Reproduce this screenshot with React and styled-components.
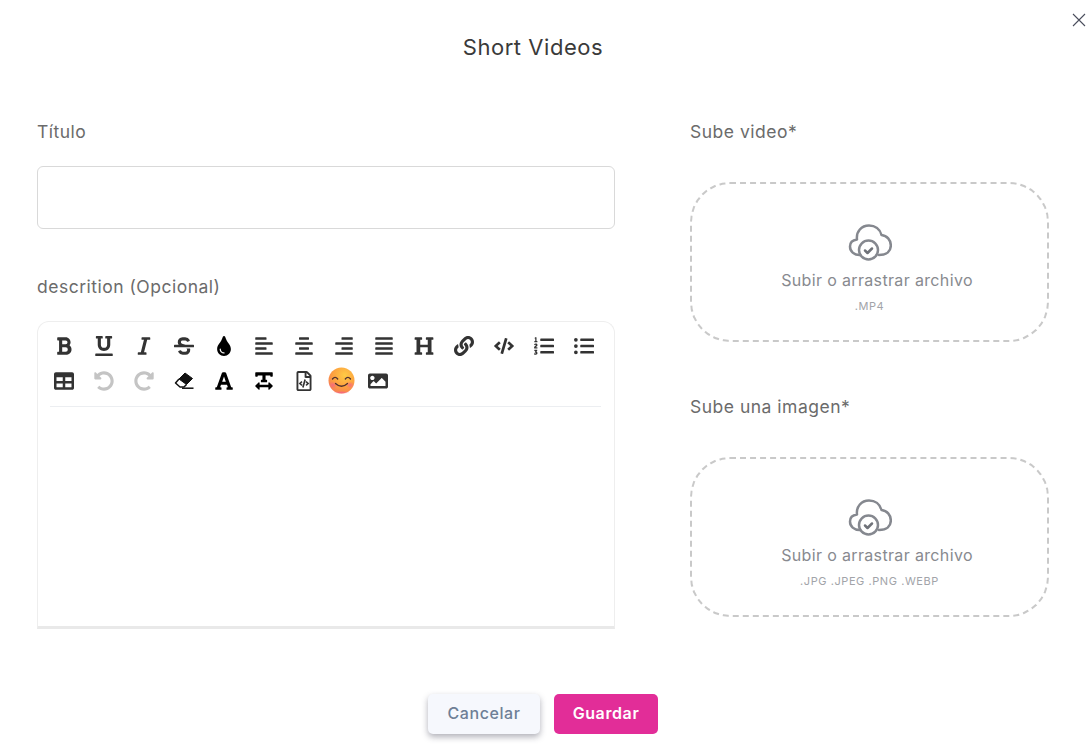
import React from 'react';
import styled, { createGlobalStyle } from 'styled-components';
import {
  FaBold, FaUnderline, FaItalic, FaStrikethrough, FaTint, FaAlignLeft, FaAlignCenter, FaAlignRight,
  FaAlignJustify, FaHeading, FaLink, FaCode, FaListOl, FaListUl, FaTable, FaUndoAlt, FaRedoAlt,
  FaFont, FaTextWidth, FaRegFileCode, FaImage,
} from 'react-icons/fa';

const Global = createGlobalStyle`
  html, body { margin: 0; padding: 0; background: #fff; }
  body { font-family: Inter, "Open Sans", sans-serif; overflow: hidden; }
`;

const Modal = styled.div`
  position: relative;
  width: 1092px;
  height: 756px;
  box-sizing: border-box;
  background: #fff;
`;
const Close = styled.button`
  position: absolute;
  top: 13px;
  right: 6px;
  width: 14px;
  height: 14px;
  padding: 0;
  border: 0;
  background: none;
  display: flex;
`;
const Title = styled.h2`
  margin: 0;
  width: 1066px;
  padding-top: 32px;
  height: 31px;
  line-height: 31px;
  font-size: 22px;
  font-weight: 400;
  letter-spacing: 0.55px;
  text-align: center;
  color: #3a3a3a;
`;
const Form = styled.div`
  display: grid;
  grid-template-columns: 578px 359px;
  column-gap: 75px;
  padding: 54px 0 0 37px;
`;
const Column = styled.div`
  display: flex;
  flex-direction: column;
`;
const Label = styled.label`
  display: block;
  height: 30px;
  line-height: 30px;
  font-size: 17.5px;
  letter-spacing: 0.5px;
  color: #6b6b6b;
  margin-bottom: ${p => p.$gap}px;
`;
const Input = styled.div`
  height: 63px;
  box-sizing: border-box;
  border: 1px solid #d9d9d9;
  border-radius: 6px;
  margin-bottom: 43px;
`;
const Editor = styled.div`
  height: 308px;
  box-sizing: border-box;
  border: 1px solid #eeeeee;
  border-bottom: 3px solid #e9e9e9;
  border-radius: 12px 12px 0 0;
`;
const Toolbar = styled.div`
  margin: 0 13px 0 12px;
  padding: 6px 0;
  border-bottom: 1px solid #eceef1;
`;
const ToolRows = styled.div`
  display: flex;
  flex-wrap: wrap;
  align-content: flex-start;
  height: 72px;
  margin: 0 -6px;
`;
const Tool = styled.span`
  width: ${p => p.$w || 40}px;
  height: 35px;
  display: flex;
  align-items: center;
  justify-content: center;
  font-size: 20px;
  color: ${p => (p.$off ? '#c4c4c4' : p.$black ? '#000' : '#333')};
`;
const Drop = styled.div`
  height: 160px;
  box-sizing: border-box;
  border: 2px dashed #c9c9c9;
  border-radius: 40px;
  display: flex;
  flex-direction: column;
  align-items: center;
  margin-bottom: ${p => p.$gap || 0}px;
  padding-top: 40px;
`;
const DropTitle = styled.div`
  margin-top: 8px;
  padding-left: 15px;
  height: 22px;
  line-height: 22px;
  font-size: 16px;
  letter-spacing: 0.35px;
  color: #888a8f;
`;
const DropHint = styled.div`
  margin-top: 7px;
  height: 16px;
  line-height: 16px;
  font-size: 11px;
  letter-spacing: 0.57px;
  color: #a2a4a9;
`;
const Footer = styled.div`
  display: flex;
  justify-content: center;
  gap: 14px;
  padding: 65px 6px 0 0;
`;
const Button = styled.button`
  width: ${p => p.$w}px;
  height: 40px;
  box-sizing: border-box;
  border: 0;
  border-radius: 5px;
  padding: 0 0 2px;
  font-family: inherit;
  font-size: 16px;
  letter-spacing: 0.6px;
  font-weight: ${p => (p.$primary ? 600 : 500)};
  color: ${p => (p.$primary ? '#fff' : '#6e7f96')};
  background: ${p => (p.$primary ? '#e22d98' : '#f6f8fd')};
  box-shadow: ${p => (p.$primary ? 'none' : '0 3px 6px rgba(60,60,80,.4)')};
`;

const Smile = () => (
  <svg width="27" height="27" viewBox="0 0 27 27">
    <defs>
      <radialGradient id="sm" cx="62%" cy="30%" r="78%">
        <stop offset="0%" stopColor="#ffcb45" />
        <stop offset="60%" stopColor="#fd9f3f" />
        <stop offset="100%" stopColor="#f5785a" />
      </radialGradient>
      <radialGradient id="bl" cx="50%" cy="50%" r="50%">
        <stop offset="0%" stopColor="#f4608f" stopOpacity=".75" />
        <stop offset="100%" stopColor="#f4608f" stopOpacity="0" />
      </radialGradient>
    </defs>
    <circle cx="13.5" cy="13.5" r="13" fill="url(#sm)" />
    <ellipse cx="5" cy="18" rx="4.500" ry="3.500" fill="url(#bl)" />
    <ellipse cx="22" cy="18" rx="4.500" ry="3.500" fill="url(#bl)" />
    <ellipse cx="13.5" cy="25.500" rx="8" ry="1.500" fill="url(#bl)" />
    <path d="M4.500 12q2.600-3.400 5.200 0M17.300 12q2.600-3.400 5.200 0M7.500 16.500q6 5.500 12 0" fill="none" stroke="#4f3030" strokeWidth="1.3" strokeLinecap="round" />
  </svg>
);

const Eraser = () => (
  <svg width="20" height="18" viewBox="0 0 20 18">
    <path d="M11 1L18.500 6.500L12.500 12.500L5 7Z" fill="#111" stroke="#111" strokeLinejoin="round" />
    <path d="M5 7L1.500 11L6 15H10L12.500 12.500" fill="none" stroke="#111" strokeWidth="1.500" strokeLinejoin="round" />
    <path d="M8 16.200H19.500" stroke="#111" strokeWidth="1.500" />
  </svg>
);

const CloudIcon = () => (
  <svg width="44" height="37" viewBox="0 0 44 37" fill="none" stroke="#85888f" strokeWidth="2.500" strokeLinecap="round" strokeLinejoin="round">
    <path d="M11.500 31C6 31 2 27.500 2 22.500C2 18.500 5 16 9 15.500C8 7.500 13.500 1.500 21 1.500C27 1.500 32 5 33.500 11C39 11.500 42.800 16 42.800 21.500C42.800 27 39 31 31 31" />
    <circle cx="20.500" cy="26" r="9.500" />
    <path d="M17 26.500l2.500 2.500 4.500-4.500" stroke="#6f7279" />
  </svg>
);

const Upload = ({ hint, gap }) => (
  <Drop $gap={gap}>
    <CloudIcon />
    <DropTitle>Subir o arrastrar archivo</DropTitle>
    <DropHint>{hint}</DropHint>
  </Drop>
);

const tools = [
  [FaBold], [FaUnderline], [FaItalic], [FaStrikethrough], [FaTint, 1], [FaAlignLeft], [FaAlignCenter], [FaAlignRight],
  [FaAlignJustify], [FaHeading], [FaLink], [FaCode], [FaListOl], [FaListUl], [FaTable], [FaUndoAlt, 0, 1], [FaRedoAlt, 0, 1],
  [Eraser, 1], [FaFont, 1], [FaTextWidth, 1], [FaRegFileCode],
];

export default function App() {
  return (
    <Modal>
      <Global />
      <Close aria-label="Cerrar">
        <svg width="14" height="14" viewBox="0 0 14 14"><path d="M1 1l12 12M13 1L1 13" stroke="#4a4e5c" strokeWidth="1.100" /></svg>
      </Close>
      <Title>Short Videos</Title>
      <Form>
        <Column>
          <Label $gap={19}>Título</Label>
          <Input />
          <Label $gap={19}>descrition (Opcional)</Label>
          <Editor>
            <Toolbar>
              <ToolRows>
                {tools.map(([Icon, black, off], i) => (
                  <Tool key={i} $black={black} $off={off}><Icon /></Tool>
                ))}
                <Tool $w={34}><Smile /></Tool>
                <Tool $w={40}><FaImage /></Tool>
              </ToolRows>
            </Toolbar>
          </Editor>
        </Column>
        <Column>
          <Label $gap={35}>Sube video*</Label>
          <Upload hint=".MP4" gap={50} />
          <Label $gap={35}>Sube una imagen*</Label>
          <Upload hint=".JPG .JPEG .PNG .WEBP" />
        </Column>
      </Form>
      <Footer>
        <Button $w={112}>Cancelar</Button>
        <Button $primary $w={104}>Guardar</Button>
      </Footer>
    </Modal>
  );
}
